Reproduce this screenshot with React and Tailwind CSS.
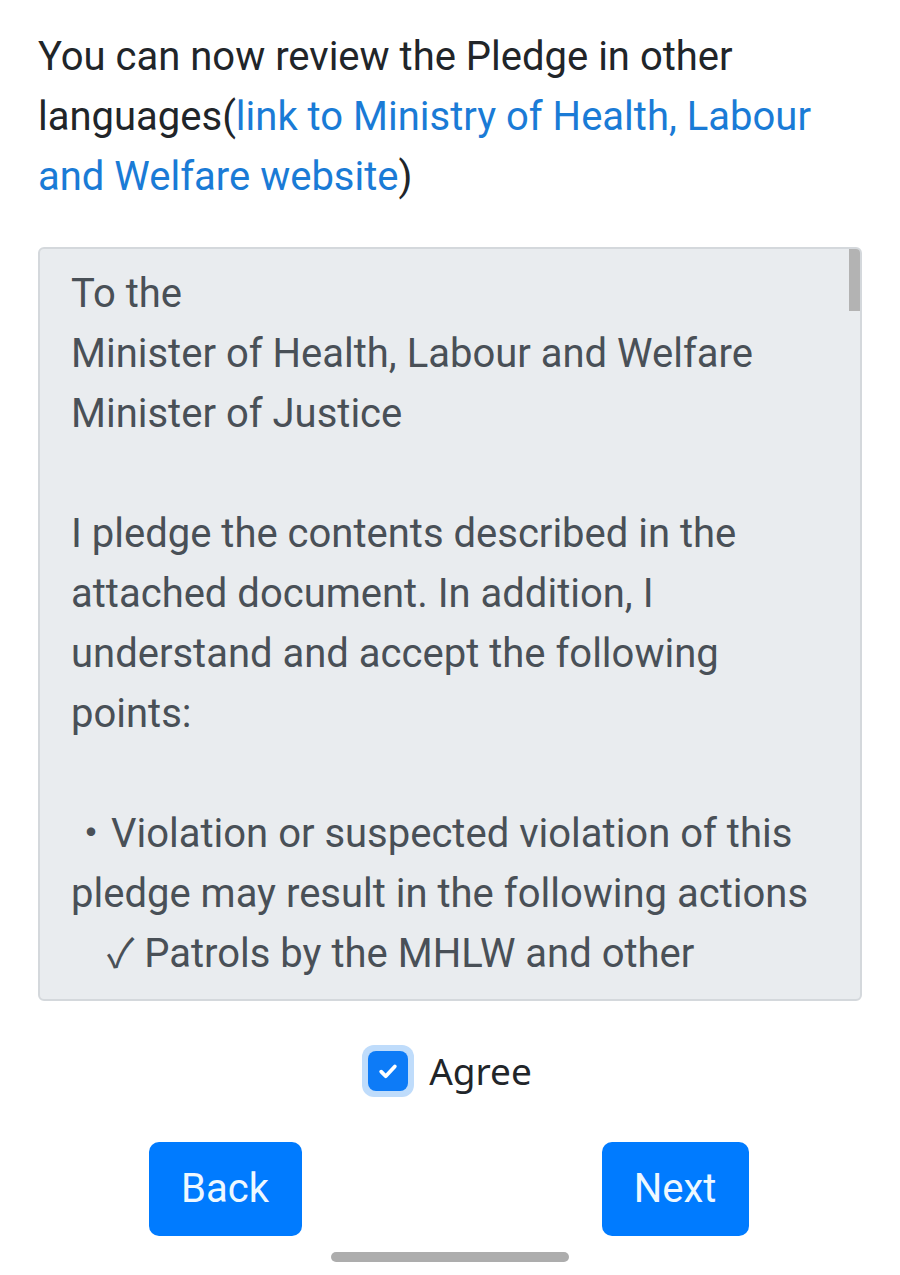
import React, { useState } from 'react';

// Ecran d'acceptation de l'engagement (Pledge)
export default function App() {
  const [agree, setAgree] = useState(true);

  return (
    <div className="w-[900px] h-[1275px] bg-white overflow-hidden" style={{ fontFamily: 'Roboto, "Noto Sans CJK JP", sans-serif' }}>
      <div className="px-[38px] pt-[27px]">
        <p className="text-[40px] leading-[60px] text-[#212529]">
          You can now review the Pledge in other languages(
          <a href="#" className="text-[#1a7bd6]">link to Ministry of Health, Labour and Welfare website</a>)
        </p>

        <div className="relative mt-[40px] h-[754px] rounded-[6px] border-2 border-[#d4d8dc] bg-[#e9ecef] overflow-hidden">
          <div className="pl-[31px] pr-[28px] pt-[15px] text-[40px] leading-[60px] text-[#495057]">
            <div>To the</div>
            <div>Minister of Health, Labour and Welfare</div>
            <div>Minister of Justice</div>
            <div>&nbsp;</div>
            <div>I pledge the contents described in the attached document. In addition, I understand and accept the following points:</div>
            <div>&nbsp;</div>
            <div>・Violation or suspected violation of this pledge may result in the following actions</div>
            <div className="pl-[36px]">✓ Patrols by the MHLW and other</div>
            <div className="pl-[72px] pt-[6px]">authorities, or investigation by the</div>
          </div>
          <div className="absolute right-0 top-0 w-[11px] h-[62px] bg-[#b3b3b3]" />
        </div>

        <div className="flex items-center justify-center mt-[42px] gap-[15px] pr-[6px]">
          <button
            onClick={() => setAgree(!agree)}
            className="w-[52px] h-[52px] rounded-[12px] bg-[#bfdcfb] flex items-center justify-center"
          >
            <span className={`w-[40px] h-[40px] rounded-[8px] flex items-center justify-center ${agree ? 'bg-[#0d7bf7]' : 'bg-white border border-gray-400'}`}>
              {agree && (
                <svg width="26" height="26" viewBox="0 0 16 16" fill="none">
                  <path d="M3.8 8.4l2.8 2.8 5.6-6" stroke="white" strokeWidth="2.3" strokeLinecap="round" strokeLinejoin="round" />
                </svg>
              )}
            </span>
          </button>
          <span className="text-[37px] text-[#212529]" style={{ fontFamily: '"Noto Sans", Roboto, sans-serif' }}>Agree</span>
        </div>
      </div>

      <div className="grid grid-cols-2 mt-[43px]">
        <div className="flex justify-center">
          <button className="w-[153px] h-[94px] rounded-[10px] bg-[#007bff] text-[40px] text-[#eef8ff]">Back</button>
        </div>
        <div className="flex justify-center">
          <button className="w-[147px] h-[94px] rounded-[10px] bg-[#007bff] text-[40px] text-[#eef8ff]">Next</button>
        </div>
      </div>

      <div className="flex justify-center mt-[16px]">
        <div className="w-[238px] h-[10px] rounded-full bg-[#adadad]" />
      </div>
    </div>
  );
}
